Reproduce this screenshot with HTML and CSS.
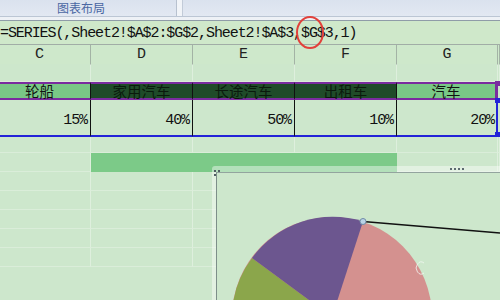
FILE: index.html
```html
<!DOCTYPE html>
<html>
<head>
<meta charset="utf-8">
<link rel="stylesheet" href="styles.css">
</head>
<body>
<div class="ribbon">
  <div class="tab">图表布局</div>
  <div class="sep"></div>
  <div class="ribbon-rest"></div>
</div>
<div class="ribbon-gap"></div>
<div class="formula">=SERIES(,Sheet2!$A$2:$G$2,Sheet2!$A$3,$G$3,1)</div>

<div class="sheet">
  <div class="row hdr">
    <div class="cell">C</div><div class="cell">D</div><div class="cell">E</div><div class="cell">F</div><div class="cell">G</div><div class="cell"></div>
  </div>
  <div class="row plain r18">
    <div class="cell"></div><div class="cell"></div><div class="cell"></div><div class="cell"></div><div class="cell"></div><div class="cell"></div>
  </div>
  <div class="row names">
    <div class="cell light">轮船</div><div class="cell dark">家用汽车</div><div class="cell dark">长途汽车</div><div class="cell dark">出租车</div><div class="cell light last">汽车</div><div class="cell out"></div>
  </div>
  <div class="row vals">
    <div class="cell">15%</div><div class="cell">40%</div><div class="cell">50%</div><div class="cell">10%</div><div class="cell last">20%</div><div class="cell out"></div>
  </div>
  <div class="row plain r16">
    <div class="cell"></div><div class="cell"></div><div class="cell"></div><div class="cell"></div><div class="cell"></div><div class="cell"></div>
  </div>
  <div class="row plain r19">
    <div class="cell"></div><div class="cell bar"></div><div class="cell bar"></div><div class="cell bar"></div><div class="cell"></div><div class="cell"></div>
  </div>
  <div class="row plain r19">
    <div class="cell"></div><div class="cell"></div><div class="cell"></div><div class="cell"></div><div class="cell"></div><div class="cell"></div>
  </div>
  <div class="row plain r19">
    <div class="cell"></div><div class="cell"></div><div class="cell"></div><div class="cell"></div><div class="cell"></div><div class="cell"></div>
  </div>
  <div class="row plain r19">
    <div class="cell"></div><div class="cell"></div><div class="cell"></div><div class="cell"></div><div class="cell"></div><div class="cell"></div>
  </div>
  <div class="row plain r19">
    <div class="cell"></div><div class="cell"></div><div class="cell"></div><div class="cell"></div><div class="cell"></div><div class="cell"></div>
  </div>
  <div class="row plain r19">
    <div class="cell"></div><div class="cell"></div><div class="cell"></div><div class="cell"></div><div class="cell"></div><div class="cell"></div>
  </div>
</div>

<div class="handle purple-h"></div>
<div class="handle blue-h1"></div>
<div class="handle blue-h2"></div>

<div class="chart">
  <span class="dot d1"></span><span class="dot d2"></span><span class="dot d3"></span>
  <span class="grip"></span>
  <div class="chart-inner">
    <svg class="pie" width="283" height="127" viewBox="217 172 283 127">
      <circle cx="332" cy="316" r="100" fill="#d4918f"/>
      <path d="M332 316 L252 257 A100 100 0 0 0 232 316 A100 100 0 0 0 332 416 Z" fill="#8ba64b"/>
      <path d="M332 316 L363 220.5 A100 100 0 0 0 252 257 Z" fill="#6c568f"/>
      <line x1="363" y1="220.5" x2="500" y2="232" stroke="#111" stroke-width="1.4"/>
      <circle cx="363" cy="220.5" r="3" fill="#b9d3e6" stroke="#6f8aa6" stroke-width="1"/>
      <path d="M424 262 A5 6 0 1 0 424 272" fill="none" stroke="#f2f7f2" stroke-width="1" opacity="0.8"/>
    </svg>
  </div>
</div>

<div class="circle"></div>
</body>
</html>
```

FILE: styles.css
```css
html, body {
  margin: 0;
  padding: 0;
}
body {
  width: 500px;
  height: 300px;
  overflow: hidden;
  position: relative;
  background: #cde7cc;
  font-family: "Liberation Mono", monospace;
}

.ribbon {
  display: flex;
  height: 16px;
  background: linear-gradient(#dae2ee, #e2e8f2);
  border-bottom: 1px solid #bcc6d4;
}
.tab {
  width: 176px;
  font-family: "Noto Sans CJK SC", "Noto Sans", sans-serif;
  font-size: 12px;
  line-height: 16px;
  color: #4a67a3;
  padding-left: 57px;
  box-sizing: border-box;
}
.sep {
  width: 5px;
  background: #f1f4f8;
  border-left: 1px solid #b7c1cf;
  border-right: 1px solid #c2cbd8;
}
.ribbon-rest {
  flex: 1;
}
.ribbon-gap {
  height: 3px;
  background: #eef1f6;
}

.formula {
  height: 23px;
  border-top: 1px solid #8f9ca8;
  border-bottom: 1px solid #a1ada6;
  background: #cfe8ca;
  font-size: 15px;
  letter-spacing: -1.08px;
  line-height: 25px;
  color: #111;
  white-space: nowrap;
  overflow: hidden;
}

.sheet {
  margin-left: -11px;
}
.row {
  display: grid;
  grid-template-columns: 102px 102px 102px 102px 101px 2px;
}
.cell {
  box-sizing: border-box;
  border-right: 1px solid rgba(255, 255, 255, 0.35);
  border-bottom: 1px solid rgba(255, 255, 255, 0.25);
}

.hdr {
  height: 19px;
  background: #cee8cb;
}
.hdr .cell {
  border-right: 1px solid #a3b3a5;
  border-bottom: none;
  text-align: center;
  font-size: 15px;
  line-height: 20px;
  color: #222;
}

.r18 { height: 18px; }
.r16 { height: 16px; }
.r19 { height: 19px; }

.names {
  height: 18px;
}
.names .cell {
  border-top: 2px solid #7a2c9f;
  border-bottom: 2px solid #7a2c9f;
  border-right: 1px solid #111;
  font-family: "Noto Sans CJK SC", sans-serif;
  font-size: 14.5px;
  line-height: 14px;
  text-align: center;
  color: #111;
}
.names .light { background: #79c886; }
.names .dark { background: #1f4b29; color: #0a1a0c; }
.names .last { border-right: 3px solid #7a2c9f; }
.names .out { border: none; }

.vals {
  height: 37px;
}
.vals .cell {
  border-right: 1px solid #111;
  border-bottom: 2px solid #2323d8;
  display: flex;
  align-items: flex-end;
  justify-content: flex-end;
  padding: 0 3px 7px 0;
  font-size: 15px;
  letter-spacing: -1.1px;
  line-height: 15px;
  color: #111;
}
.vals .last { border-right: 2px solid #2323d8; padding-right: 2px; }
.vals .out { border: none; }

.bar {
  background: #7cca88;
  border-right-color: #7cca88 !important;
  border-bottom-color: #7cca88 !important;
}

.handle {
  position: absolute;
  width: 5px;
  height: 5px;
}
.purple-h { left: 495px; top: 81px; background: #7a2c9f; }
.blue-h1 { left: 495px; top: 98px; background: #2323d8; }
.blue-h2 { left: 495px; top: 132px; background: #2323d8; }

.chart {
  position: absolute;
  left: 212px;
  top: 166px;
  width: 288px;
  height: 134px;
  box-sizing: border-box;
  padding: 6px 0 0 4px;
  background: rgba(255, 255, 255, 0.42);
  border-radius: 3px 0 0 0;
}
.chart-inner {
  height: 100%;
  border-left: 1px solid #7d8f89;
  border-top: 1px solid #93a49e;
  background: #cde7cc;
  overflow: hidden;
}
.pie {
  display: block;
}
.dot {
  position: absolute;
  width: 2px;
  height: 2px;
  background: #4f5e62;
}
.d1 { left: 2px; top: 4px; }
.d2 { left: 6px; top: 4px; }
.d3 { left: 2px; top: 8px; }
.grip {
  position: absolute;
  left: 238px;
  top: 2px;
  width: 14px;
  height: 2px;
  background: repeating-linear-gradient(90deg, #5d6a70 0 2px, transparent 2px 4px);
}

.circle {
  position: absolute;
  left: 296px;
  top: 16px;
  width: 28px;
  height: 33px;
  box-sizing: border-box;
  border: 2.5px solid #e2413b;
  border-radius: 50%;
}
```
